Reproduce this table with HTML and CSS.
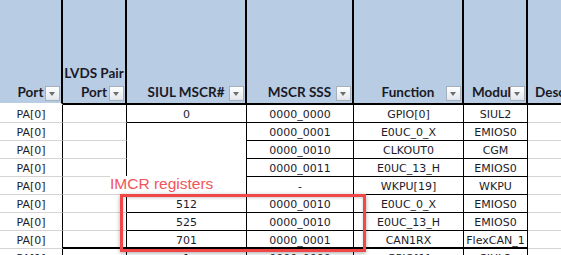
FILE: index.html
```html
<!DOCTYPE html>
<html>
<head>
<meta charset="utf-8">
<link rel="stylesheet" href="styles.css">
</head>
<body>
<div class="sheet">
  <div class="grid">
    <div class="hd hd-port"><span>Port</span><span class="filter"></span></div>
    <div class="hd"><span>LVDS Pair<br>Port</span><span class="filter"></span></div>
    <div class="hd"><span>SIUL MSCR#</span><span class="filter"></span></div>
    <div class="hd"><span>MSCR SSS</span><span class="filter"></span></div>
    <div class="hd"><span>Function</span><span class="filter"></span></div>
    <div class="hd"><span>Module</span><span class="filter"></span></div>
    <div class="hd hd-desc"><span>Description</span></div>

    <div class="c g">PA[0]</div>
    <div class="c g"></div>
    <div class="c">0</div>
    <div class="c">0000_0000</div>
    <div class="c">GPIO[0]</div>
    <div class="c">SIUL2</div>
    <div class="c desc"></div>

    <div class="c g">PA[0]</div>
    <div class="c g"></div>
    <div class="c span4"></div>
    <div class="c">0000_0001</div>
    <div class="c">E0UC_0_X</div>
    <div class="c">EMIOS0</div>
    <div class="c desc"></div>

    <div class="c g">PA[0]</div>
    <div class="c g"></div>
    <div class="c">0000_0010</div>
    <div class="c">CLKOUT0</div>
    <div class="c">CGM</div>
    <div class="c desc"></div>

    <div class="c g">PA[0]</div>
    <div class="c g"></div>
    <div class="c">0000_0011</div>
    <div class="c">E0UC_13_H</div>
    <div class="c">EMIOS0</div>
    <div class="c desc"></div>

    <div class="c g">PA[0]</div>
    <div class="c g"></div>
    <div class="c">-</div>
    <div class="c">WKPU[19]</div>
    <div class="c">WKPU</div>
    <div class="c desc"></div>

    <div class="c g">PA[0]</div>
    <div class="c g"></div>
    <div class="c">512</div>
    <div class="c">0000_0010</div>
    <div class="c">E0UC_0_X</div>
    <div class="c">EMIOS0</div>
    <div class="c desc"></div>

    <div class="c g">PA[0]</div>
    <div class="c g"></div>
    <div class="c">525</div>
    <div class="c">0000_0010</div>
    <div class="c">E0UC_13_H</div>
    <div class="c">EMIOS0</div>
    <div class="c desc"></div>

    <div class="c g">PA[0]</div>
    <div class="c last"></div>
    <div class="c last">701</div>
    <div class="c last">0000_0001</div>
    <div class="c last">CAN1RX</div>
    <div class="c last">FlexCAN_1</div>
    <div class="c desc"></div>

    <div class="c g">PA[1]</div>
    <div class="c g"></div>
    <div class="c">1</div>
    <div class="c">0000_0000</div>
    <div class="c">GPIO[1]</div>
    <div class="c">SIUL2</div>
    <div class="c desc"></div>
  </div>

  <div class="note-label">IMCR registers</div>
  <div class="note-box"></div>
</div>
</body>
</html>
```

FILE: styles.css
```css
* {
  box-sizing: border-box;
}

html,
body {
  margin: 0;
  padding: 0;
}

body {
  width: 561px;
  height: 255px;
  overflow: hidden;
  background: #ffffff;
  font-family: "DejaVu Sans", Verdana, sans-serif;
}

.sheet {
  position: relative;
  height: 255px;
  overflow: hidden;
}

.grid {
  display: grid;
  grid-template-columns: 63px 64px 120px 107px 110px 64px 1fr;
  grid-template-rows: 105px repeat(9, 18px);
}

/* header */
.hd {
  position: relative;
  display: flex;
  flex-direction: column;
  justify-content: flex-end;
  align-items: center;
  text-align: center;
  padding-bottom: 1px;
  background: #b8cce4;
  border-right: 2px solid #000;
  border-bottom: 2px solid #000;
  font-family: Lato, "Liberation Sans", sans-serif;
  font-weight: 700;
  font-size: 13.5px;
  line-height: 19px;
  color: #1a1a26;
  white-space: nowrap;
  overflow: hidden;
}

.hd-port {
  background-clip: padding-box;
  border-bottom-color: #ffffff;
}

.hd-desc {
  border-right: none;
  align-items: flex-start;
  padding-left: 7px;
}

.filter {
  position: absolute;
  right: 1px;
  bottom: 2px;
  width: 15px;
  height: 15px;
  border: 1px solid #a6afbc;
  background: linear-gradient(#ffffff, #e2e6ec);
}

.filter::after {
  content: "";
  position: absolute;
  left: 3px;
  top: 5px;
  border-left: 3.5px solid transparent;
  border-right: 3.5px solid transparent;
  border-top: 4px solid #6e6e6e;
}

/* body cells */
.c {
  padding-top: 3px;
  font-size: 11px;
  line-height: 14px;
  text-align: center;
  color: #1b1b2b;
  border-right: 1px solid #000;
  border-bottom: 1px solid #000;
  white-space: nowrap;
  overflow: hidden;
}

.g {
  border-bottom-color: #d4d4d4;
}

.desc {
  border-right: none;
  border-bottom-color: #d4d4d4;
}

.last {
  border-bottom: 2px solid #000;
}

.span4 {
  grid-row: span 4;
}

/* annotation */
.note-label {
  position: absolute;
  left: 110px;
  top: 176px;
  height: 18px;
  padding-right: 6px;
  background: #ffffff;
  color: #f2545b;
  font-family: "Liberation Sans", Arial, sans-serif;
  font-size: 15.5px;
  line-height: 16px;
  white-space: nowrap;
}

.note-box {
  position: absolute;
  left: 120px;
  top: 194px;
  width: 246px;
  height: 58px;
  border: 3px solid #f04848;
  box-shadow: 0 1px 4px rgba(0, 0, 0, 0.35), inset 0 1px 3px rgba(0, 0, 0, 0.2);
}
```
